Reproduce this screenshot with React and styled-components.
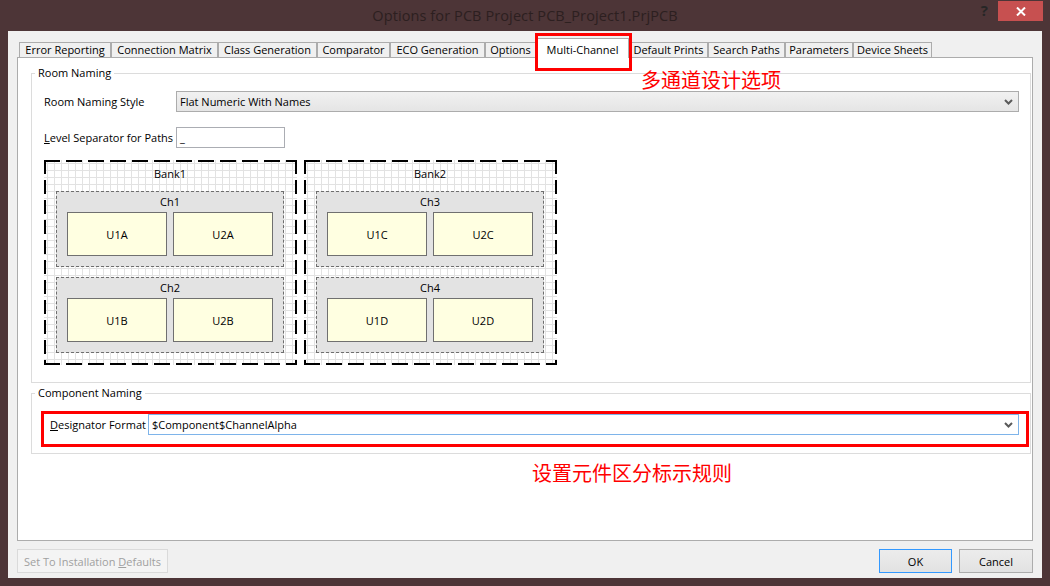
import React from 'react';
import styled, { createGlobalStyle } from 'styled-components';

const GlobalStyle = createGlobalStyle`
  html, body {
    margin: 0;
    padding: 0;
    background: #4d3537;
  }
  body {
    font-family: "Segoe UI", "Open Sans", "Liberation Sans", sans-serif;
    font-size: 11px;
    color: #000;
  }
`;

const Window = styled.div`
  width: 1050px;
  height: 586px;
  background: #4d3537;
  display: flex;
  flex-direction: column;
  overflow: hidden;
`;

const TitleBar = styled.div`
  height: 31px;
  flex: none;
  display: grid;
  grid-template-columns: 1fr auto 1fr;
  align-items: center;
`;

const Title = styled.div`
  grid-column: 2;
  font-size: 14.5px;
  color: #2c1f20;
  letter-spacing: 0.1px;
`;

const Controls = styled.div`
  grid-column: 3;
  justify-self: end;
  align-self: start;
  display: flex;
  align-items: center;
  margin: 1px 7px 0 0;
`;

const Help = styled.span`
  font-size: 15px;
  font-weight: 700;
  color: #262626;
  margin-right: 10px;
  margin-top: -2px;
`;

const CloseButton = styled.div`
  width: 45px;
  height: 20px;
  background: #c75050;
  display: flex;
  align-items: center;
  justify-content: center;
`;

const Client = styled.div`
  flex: 1;
  margin: 0 8px 8px;
  background: #f0f0f0;
  padding: 7px 9px 5px 9px;
  display: flex;
  flex-direction: column;
  position: relative;
`;

const TabStrip = styled.div`
  display: flex;
  align-items: flex-end;
  margin-left: 2px;
  height: 19px;
`;

const Tab = styled.div`
  box-sizing: border-box;
  width: ${p => p.$w}px;
  height: ${p => (p.$active ? 20 : 15)}px;
  padding-top: ${p => (p.$active ? 4 : 0)}px;
  margin-bottom: ${p => (p.$active ? -1 : 0)}px;
  line-height: 14px;
  border: 1px solid #acacac;
  border-bottom: none;
  background: ${p => (p.$active ? '#fff' : '#f0f0f0')};
  text-align: center;
  white-space: nowrap;
  position: relative;
  z-index: ${p => (p.$active ? 1 : 0)};
`;

const Panel = styled.div`
  flex: 1;
  background: #fff;
  border: 1px solid #acacac;
  padding: 7px 1px 0 13px;
  display: flex;
  flex-direction: column;
`;

const GroupBox = styled.fieldset`
  margin: ${p => p.$mt || 0}px 0 0;
  padding: 0;
  min-width: 0;
  border: 1px solid #dcdcdc;
`;

const Legend = styled.legend`
  margin-left: 3px;
  padding: 0 3px;
  line-height: 16px;
`;

const GroupBody = styled.div`
  padding: ${p => p.$pad};
`;

const FormRow = styled.div`
  display: flex;
  align-items: center;
  margin-top: ${p => p.$mt || 0}px;
`;

const Label = styled.div`
  width: ${p => p.$w}px;
  flex: none;
  white-space: nowrap;
`;

const Select = styled.div`
  flex: 1;
  box-sizing: border-box;
  height: 21px;
  display: flex;
  align-items: center;
  justify-content: space-between;
  padding: 0 5px 0 3px;
  border: 1px solid ${p => (p.$focused ? '#7eb4ea' : '#acacac')};
  background: ${p => (p.$focused ? '#fff' : 'linear-gradient(#f1f1f1, #e5e5e5)')};
`;

const TextBox = styled.div`
  box-sizing: border-box;
  width: 109px;
  height: 21px;
  border: 1px solid #abadb3;
  background: #fff;
  padding-left: 3px;
  line-height: 19px;
`;

const BankRow = styled.div`
  display: flex;
  gap: 7px;
  margin-top: 12px;
`;

const dashH = 'repeating-linear-gradient(90deg, #000 0 16px, transparent 16px 22px)';
const dashV = 'repeating-linear-gradient(180deg, #000 0 14px, transparent 14px 20px)';

const Bank = styled.div`
  box-sizing: border-box;
  width: 253px;
  height: 205px;
  padding: 6px 13px 12px 12px;
  display: flex;
  flex-direction: column;
  gap: 10px;
  background:
    ${dashH} left top / 100% 2px no-repeat,
    ${dashH} left bottom / 100% 2px no-repeat,
    ${dashV} left top / 2px 100% no-repeat,
    ${dashV} right top / 2px 100% no-repeat,
    linear-gradient(90deg, #e2e2e2 1px, transparent 1px) 3px 3px / 7px 7px,
    linear-gradient(#e2e2e2 1px, transparent 1px) 3px 3px / 7px 7px,
    #fff;
`;

const BankTitle = styled.div`
  text-align: center;
  line-height: 16px;
  margin-bottom: -1px;
`;

const Channel = styled.div`
  height: 76px;
  box-sizing: border-box;
  border: 1px dashed #6e6e6e;
  background: #e3e3e3;
  padding: 2px 10px 10px;
`;

const ChannelTitle = styled.div`
  text-align: center;
  line-height: 16px;
  margin-bottom: 2px;
`;

const Parts = styled.div`
  display: flex;
  gap: 6px;
`;

const Part = styled.div`
  box-sizing: border-box;
  width: 100px;
  height: 44px;
  border: 1px solid #707070;
  background: #ffffe1;
  display: flex;
  align-items: center;
  justify-content: center;
`;

const ButtonRow = styled.div`
  display: flex;
  justify-content: space-between;
  margin-top: 8px;
`;

const ButtonGroup = styled.div`
  display: flex;
  gap: 7px;
`;

const Button = styled.div`
  box-sizing: border-box;
  width: ${p => p.$w}px;
  height: 24px;
  display: flex;
  align-items: center;
  justify-content: center;
  border: 1px solid ${p => p.$border || '#acacac'};
  background: ${p => (p.$disabled ? '#f4f4f4' : 'linear-gradient(#ececec, #e2e2e2)')};
  color: ${p => (p.$disabled ? '#a0a0a0' : '#000')};
`;

const RedBox = styled.div`
  position: absolute;
  box-sizing: border-box;
  border: 3px solid #ff0000;
  pointer-events: none;
  z-index: 2;
`;

const Note = styled.div`
  position: absolute;
  color: #ff0000;
  font-family: "Noto Sans CJK SC", sans-serif;
  font-size: 20px;
  line-height: 22px;
  white-space: nowrap;
  z-index: 2;
`;

const Chevron = () => (
  <svg width="9" height="6" viewBox="0 0 9 6">
    <polyline points="1,1 4.5,4.5 8,1" fill="none" stroke="#5a5a5a" strokeWidth="2" />
  </svg>
);

const tabs = [
  { label: 'Error Reporting', w: 92 },
  { label: 'Connection Matrix', w: 107 },
  { label: 'Class Generation', w: 99 },
  { label: 'Comparator', w: 73 },
  { label: 'ECO Generation', w: 95 },
  { label: 'Options', w: 51 },
  { label: 'Multi-Channel', w: 93, active: true },
  { label: 'Default Prints', w: 79 },
  { label: 'Search Paths', w: 77 },
  { label: 'Parameters', w: 68 },
  { label: 'Device Sheets', w: 79 },
];

const banks = [
  { name: 'Bank1', channels: [{ name: 'Ch1', parts: ['U1A', 'U2A'] }, { name: 'Ch2', parts: ['U1B', 'U2B'] }] },
  { name: 'Bank2', channels: [{ name: 'Ch3', parts: ['U1C', 'U2C'] }, { name: 'Ch4', parts: ['U1D', 'U2D'] }] },
];

export default function App() {
  return (
    <Window>
      <GlobalStyle />
      <TitleBar>
        <Title>Options for PCB Project PCB_Project1.PrjPCB</Title>
        <Controls>
          <Help>?</Help>
          <CloseButton>
            <svg width="10" height="9" viewBox="0 0 10 9">
              <path d="M1 0.5 L9 8.5 M9 0.5 L1 8.5" stroke="#fff" strokeWidth="2" />
            </svg>
          </CloseButton>
        </Controls>
      </TitleBar>

      <Client>
        <TabStrip>
          {tabs.map(t => (
            <Tab key={t.label} $w={t.w} $active={t.active}>{t.label}</Tab>
          ))}
        </TabStrip>

        <Panel>
          <GroupBox>
            <Legend>Room Naming</Legend>
            <GroupBody $pad="10px 11px 17px 12px">
              <FormRow>
                <Label $w={132}>Room Naming Style</Label>
                <Select>
                  <span>Flat Numeric With Names</span>
                  <Chevron />
                </Select>
              </FormRow>
              <FormRow $mt={15}>
                <Label $w={132}><u>L</u>evel Separator for Paths</Label>
                <TextBox>_</TextBox>
              </FormRow>
              <BankRow>
                {banks.map(b => (
                  <Bank key={b.name}>
                    <BankTitle>{b.name}</BankTitle>
                    {b.channels.map(c => (
                      <Channel key={c.name}>
                        <ChannelTitle>{c.name}</ChannelTitle>
                        <Parts>
                          {c.parts.map(p => <Part key={p}>{p}</Part>)}
                        </Parts>
                      </Channel>
                    ))}
                  </Bank>
                ))}
              </BankRow>
            </GroupBody>
          </GroupBox>

          <GroupBox $mt={2}>
            <Legend>Component Naming</Legend>
            <GroupBody $pad="13px 11px 18px 18px">
              <FormRow>
                <Label $w={98}><u>D</u>esignator Format</Label>
                <Select $focused>
                  <span>$Component$ChannelAlpha</span>
                  <Chevron />
                </Select>
              </FormRow>
            </GroupBody>
          </GroupBox>
        </Panel>

        <ButtonRow>
          <Button $w={151} $disabled $border="#dadada">
            <span>Set To Installation <u>D</u>efaults</span>
          </Button>
          <ButtonGroup>
            <Button $w={73} $border="#3399ff">OK</Button>
            <Button $w={74}>Cancel</Button>
          </ButtonGroup>
        </ButtonRow>

        <RedBox style={{ left: 527, top: 2, width: 97, height: 38 }} />
        <Note style={{ left: 633, top: 38 }}>多通道设计选项</Note>
        <RedBox style={{ left: 33, top: 380, width: 988, height: 36 }} />
        <Note style={{ left: 524, top: 431 }}>设置元件区分标示规则</Note>
      </Client>
    </Window>
  );
}
